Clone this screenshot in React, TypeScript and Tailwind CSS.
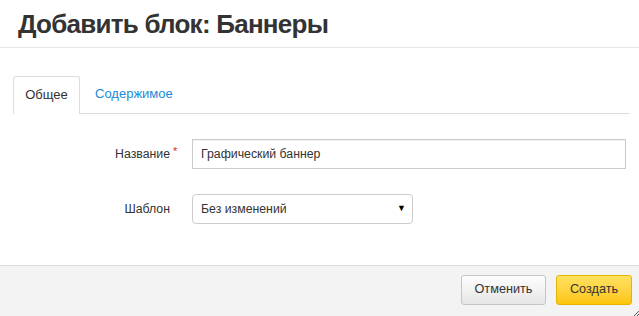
import React from 'react';

const App: React.FC = () => {
  return (
    <div className="flex h-[316px] w-[639px] flex-col overflow-hidden bg-white font-['Liberation_Sans',Arial,sans-serif] text-[13px] text-[#333]">
      {/* Header */}
      <div className="flex h-[48px] shrink-0 items-center border-b border-[#e5e5e5] pl-[18px]">
        <h1 className="pt-px text-[26px] font-bold leading-none tracking-[-0.75px] text-[#333]">
          Добавить блок: Баннеры
        </h1>
      </div>

      {/* Body */}
      <div className="flex-1 pt-[28px]">
        {/* Tabs */}
        <div className="ml-[13px] mr-[9px] flex h-[38px] border-b border-[#ddd]">
          <div className="-mb-px flex w-[67px] items-center justify-center rounded-t-[3px] border border-b-0 border-[#ddd] bg-white pb-px">
            Общее
          </div>
          <div className="flex items-center pl-[15px] pb-px text-[#1a8ad8]">Содержимое</div>
        </div>

        {/* Form */}
        <div className="flex flex-col gap-[25px] pt-[25px] text-[12.3px]">
          <div className="flex items-center">
            <label className="relative w-[170px] text-right">
              Название
              <span className="absolute left-[173px] top-[-2px] text-[11px] text-[#e02222]">*</span>
            </label>
            <input
              className="ml-[22px] h-[30px] w-[434px] border border-[#ccc] px-[8px] text-[12.3px] text-[#333] shadow-[inset_0_1px_1px_rgba(0,0,0,0.06)] outline-none"
              defaultValue="Графический баннер"
            />
          </div>
          <div className="flex items-center">
            <label className="w-[170px] text-right">Шаблон</label>
            <div className="ml-[22px] flex h-[30px] w-[221px] items-center justify-between rounded-[4px] border border-[#ccc] pl-[8px] pr-[6px]">
              <span>Без изменений</span>
              <span className="text-[9px] text-black">▼</span>
            </div>
          </div>
        </div>
      </div>

      {/* Footer */}
      <div className="relative flex h-[51px] shrink-0 items-center justify-end gap-[10px] border-t border-[#dadada] bg-[#f3f3f3] pr-[7px] pb-[2px]">
        <button className="h-[30px] w-[85px] rounded-[3px] border border-[#c5c5c5] bg-gradient-to-b from-[#fdfdfd] to-[#e6e6e6] text-[12.7px] text-[#333]">
          Отменить
        </button>
        <button className="h-[30px] w-[76px] rounded-[3px] border border-[#e3b400] bg-gradient-to-b from-[#ffe15e] to-[#fcc500] text-[12.7px] text-[#333]">
          Создать
        </button>
        <svg className="absolute bottom-0 right-0" width="5" height="5" viewBox="0 0 5 5">
          <path d="M5 0 L0 5 M5 3 L3 5" stroke="#555" strokeWidth="1" />
        </svg>
      </div>
    </div>
  );
};

export default App;
